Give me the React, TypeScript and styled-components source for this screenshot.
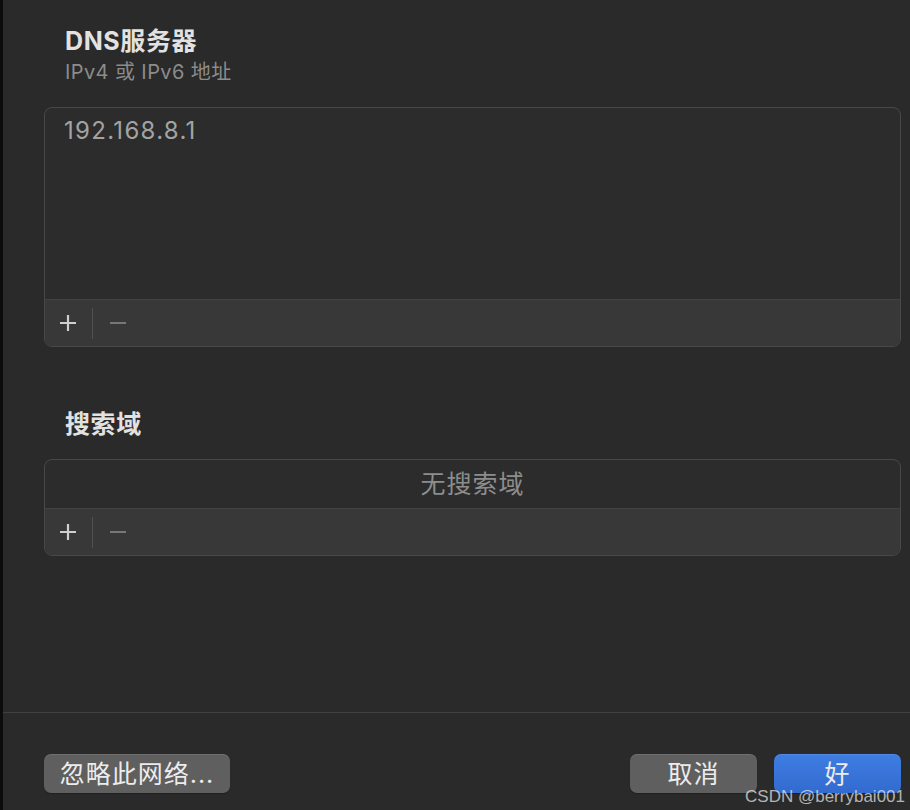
import React from 'react';
import styled, { createGlobalStyle } from 'styled-components';

const GlobalStyle = createGlobalStyle`
  html, body {
    margin: 0;
    padding: 0;
    background: #292a29;
  }
  body {
    font-family: Inter, "Noto Sans CJK SC", sans-serif;
  }
`;

const Page = styled.div`
  position: relative;
  width: 910px;
  height: 810px;
  box-sizing: border-box;
  border-left: 3px solid #0c0c0c;
  background: #292a29;
  display: flex;
  flex-direction: column;
  overflow: hidden;
`;

const Main = styled.div`
  height: 712px;
  box-sizing: border-box;
  padding: 26px 9px 0 41px;
  display: flex;
  flex-direction: column;
`;

const Title = styled.div<{ $top?: number }>`
  margin-top: ${(p) => p.$top ?? 0}px;
  padding-left: 21px;
  font-size: 25px;
  line-height: 30px;
  font-weight: 700;
  letter-spacing: 0.6px;
  color: #e2e2e2;
`;

const Subtitle = styled.div`
  margin-top: 4px;
  padding-left: 21px;
  font-size: 20px;
  line-height: 24px;
  letter-spacing: 0.4px;
  color: #8c8c8c;
`;

const ListBox = styled.div<{ $top: number }>`
  margin-top: ${(p) => p.$top}px;
  border: 1px solid #474847;
  border-radius: 8px;
  overflow: hidden;
  display: flex;
  flex-direction: column;
  background: #2b2c2b;
`;

const ListBody = styled.div<{ $height: number; $center?: boolean }>`
  height: ${(p) => p.$height}px;
  box-sizing: border-box;
  padding: ${(p) => (p.$center ? '0' : '9px 19px')};
  display: flex;
  align-items: ${(p) => (p.$center ? 'center' : 'flex-start')};
  justify-content: ${(p) => (p.$center ? 'center' : 'flex-start')};
`;

const Entry = styled.span`
  font-size: 24px;
  line-height: 28px;
  letter-spacing: 1.3px;
  color: #a3a3a3;
`;

const Placeholder = styled.span`
  font-size: 25px;
  line-height: 28px;
  letter-spacing: 1px;
  color: #8d8d8d;
`;

const ListFooter = styled.div`
  height: 46px;
  border-top: 1px solid #414241;
  background: #373837;
  display: flex;
  align-items: center;
  padding-left: 13px;
`;

const ToolButton = styled.button<{ $dim?: boolean }>`
  width: 20px;
  height: 20px;
  padding: 0;
  border: 0;
  background: transparent;
  display: flex;
  align-items: center;
  justify-content: center;
  color: ${(p) => (p.$dim ? '#767776' : '#cfcfcf')};
`;

const ToolDivider = styled.div`
  width: 1px;
  height: 31px;
  background: #4f504f;
  margin: 0 15px 0 14px;
`;

const Divider = styled.div`
  height: 1px;
  background: #3f403f;
`;

const ButtonBar = styled.div`
  padding: 41px 9px 0 41px;
  display: flex;
  align-items: center;
`;

const Spacer = styled.div`
  flex: 1;
`;

const Button = styled.button<{ $primary?: boolean; $width: number }>`
  width: ${(p) => p.$width}px;
  height: 39px;
  box-sizing: border-box;
  border: 0;
  border-radius: 7px;
  padding: 0;
  font-family: Inter, "Noto Sans CJK SC", sans-serif;
  font-size: 25px;
  line-height: 28px;
  letter-spacing: 1px;
  color: #ececec;
  background: ${(p) =>
    p.$primary ? 'linear-gradient(#3f7de2, #326bd0)' : '#5f5f5f'};
  box-shadow: inset 0 1px 0 rgba(255, 255, 255, 0.1), 0 1px 1px rgba(0, 0, 0, 0.25);
  & + & {
    margin-left: 17px;
  }
`;

const Watermark = styled.div`
  position: absolute;
  right: 5px;
  bottom: 3px;
  font-family: "Liberation Sans", Arial, sans-serif;
  font-size: 17px;
  line-height: 20px;
  color: rgba(235, 235, 235, 0.72);
`;

const PlusIcon = () => (
  <svg width="18" height="18" viewBox="0 0 18 18">
    <path d="M9 1v16M1 9h16" stroke="currentColor" strokeWidth="2.2" />
  </svg>
);

const MinusIcon = () => (
  <svg width="18" height="18" viewBox="0 0 18 18">
    <path d="M1 9h16" stroke="currentColor" strokeWidth="2.2" />
  </svg>
);

const Toolbar: React.FC = () => (
  <ListFooter>
    <ToolButton>
      <PlusIcon />
    </ToolButton>
    <ToolDivider />
    <ToolButton $dim>
      <MinusIcon />
    </ToolButton>
  </ListFooter>
);

export default function App() {
  return (
    <>
      <GlobalStyle />
      <Page>
        <Main>
          <Title>DNS服务器</Title>
          <Subtitle>IPv4 或 IPv6 地址</Subtitle>
          <ListBox $top={23}>
            <ListBody $height={191}>
              <Entry>192.168.8.1</Entry>
            </ListBody>
            <Toolbar />
          </ListBox>

          <Title $top={62}>搜索域</Title>
          <ListBox $top={20}>
            <ListBody $height={48} $center>
              <Placeholder>无搜索域</Placeholder>
            </ListBody>
            <Toolbar />
          </ListBox>
        </Main>
        <Divider />
        <ButtonBar>
          <Button $width={186}>忽略此网络...</Button>
          <Spacer />
          <Button $width={127}>取消</Button>
          <Button $width={127} $primary>
            好
          </Button>
        </ButtonBar>
        <Watermark>CSDN @berrybai001</Watermark>
      </Page>
    </>
  );
}
